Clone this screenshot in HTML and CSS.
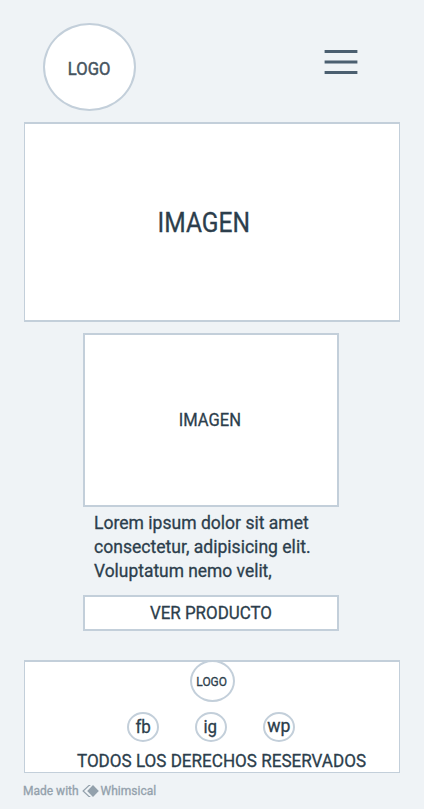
FILE: index.html
```
<!DOCTYPE html>
<html lang="es">
<head>
<meta charset="utf-8">
<title>Wireframe móvil</title>
<link rel="stylesheet" href="styles.css">
</head>
<body>
<header class="header">
  <div class="circle logo"><span class="label logo-text">LOGO</span></div>
  <svg class="menu" width="34" height="26" viewBox="0 0 34 26" stroke="#4b5f70" stroke-width="3">
    <path d="M.6 2.5h32.8M.6 13h32.8M.6 23.5h32.8"/>
  </svg>
</header>
<section class="hero"><span class="label hero-text">IMAGEN</span></section>
<main class="product">
  <div class="box picture"><span class="label picture-text">IMAGEN</span></div>
  <p class="description">
    <span class="line line-one">Lorem ipsum dolor sit amet</span>
    <span class="line line-two">consectetur, adipisicing elit.</span>
    <span class="line line-three">Voluptatum nemo velit,</span>
  </p>
  <div class="box button"><span class="label button-text">VER PRODUCTO</span></div>
</main>
<footer class="footer">
  <div class="circle logo-small"><span class="label logo-small-text">LOGO</span></div>
  <nav class="social">
    <div class="circle network"><span class="label fb">fb</span></div>
    <div class="circle network"><span class="label ig">ig</span></div>
    <div class="circle network"><span class="label wp">wp</span></div>
  </nav>
  <p class="rights"><span class="label rights-text">TODOS LOS DERECHOS RESERVADOS</span></p>
</footer>
<div class="credit">
  <span class="made">Made with</span>
  <svg class="mark" width="17" height="14" viewBox="0 0 17 14">
    <path d="M8.3 1.5 6.9 1.5 1.1 7l5.8 5.5h1.4" fill="none" stroke="#93a1ac" stroke-width="1.2"/>
    <path d="M11 1l5.8 6L11 13 5.2 7z" fill="#93a1ac"/>
  </svg>
  <span class="whimsical">Whimsical</span>
</div>
</body>
</html>
```
FILE: styles.css
```
* { box-sizing: border-box; }

body {
  margin: 0;
  width: 424px;
  height: 809px;
  background: #eff3f6;
  color: #2c3e4c;
  font: 400 18px/24px Roboto, sans-serif;
  -webkit-text-stroke: .3px;
  overflow: hidden;
}

p { margin: 0; }

.label, .line { display: block; white-space: nowrap; }
.label { transform: scaleX(.94); }

.circle {
  display: flex;
  align-items: center;
  justify-content: center;
  border: 2px solid #c3cfda;
  border-radius: 50%;
  background: #fff;
}

.header {
  display: flex;
  justify-content: space-between;
  align-items: flex-start;
  height: 122px;
  padding: 23px 66px 0 43px;
}
.logo { width: 93px; height: 88px; }
.logo-text { margin: 4px 0 0; color: #46545f; transform: scaleX(.92); -webkit-text-stroke: .5px; }
.menu { margin-top: 26px; }

.hero {
  display: flex;
  align-items: center;
  justify-content: center;
  height: 200px;
  margin: 0 24px;
  padding: 2px 17px 0 0;
  border: solid #c3cfda;
  border-width: 2px 1px;
  background: #fff;
}
.hero-text { font-size: 27px; line-height: 32px; transform: scaleX(.91); }

.product { width: 256px; margin: 11px 0 0 83px; }
.box {
  display: flex;
  align-items: center;
  justify-content: center;
  border: 2px solid #c3cfda;
  background: #fff;
}
.picture { height: 174px; padding-right: 2px; }
.picture-text { transform: scaleX(.918); }

.description { height: 88px; padding: 4px 0 0 11px; }
.line { transform-origin: left; }
.line-one { transform: scaleX(.975); }
.line-two { transform: scaleX(.976); }
.line-three { transform: scaleX(.967); }

.button { height: 36px; padding-right: 1px; }

.footer {
  height: 113px;
  margin: 29px 24px 0;
  border: 1px solid #c3cfda;
  border-top-width: 2px;
  background: #fff;
}
.logo-small { width: 45px; height: 42px; margin: -2px auto 0; }
.logo-small-text { font-size: 13px; line-height: 16px; margin-top: 1px; transform: scaleX(.92); }
.social { display: flex; justify-content: center; gap: 36px; margin: 10px 2px 0 0; }
.network { width: 32px; height: 30px; }
.ig { margin-right: 2px; }
.wp { margin-bottom: 3px; transform: scaleX(.98); }
.rights { display: flex; justify-content: center; margin-top: 7px; padding-left: 18px; }
.rights-text { transform: scaleX(.948); }

.credit {
  display: flex;
  align-items: center;
  height: 16px;
  margin: 10px 0 0 23px;
  color: #93a1ac;
  font-size: 12px;
  line-height: 16px;
}
.mark { margin: 0 2px 0 3px; }
.made, .whimsical { letter-spacing: 0; }
```
